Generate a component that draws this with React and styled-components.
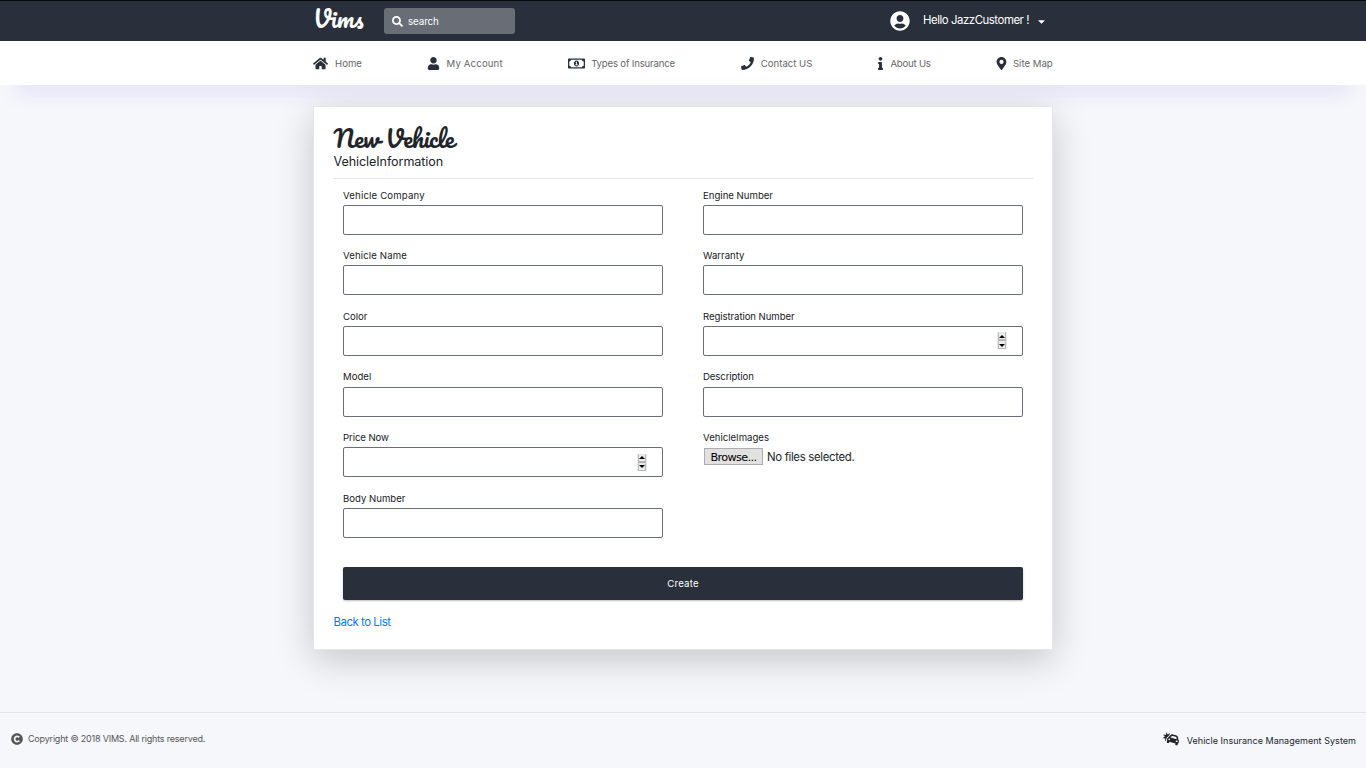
import React from "react";
import styled, { createGlobalStyle } from "styled-components";
import {
  FaHome, FaUser, FaRegMoneyBillAlt, FaPhone, FaInfo, FaMapMarkerAlt,
  FaUserCircle, FaSearch, FaCaretDown, FaCopyright, FaCarCrash,
} from "react-icons/fa";

const sans = `"Century Gothic", Inter, "Liberation Sans", sans-serif`;
const script = `Pacifico, cursive`;

const GlobalStyle = createGlobalStyle`
  * { box-sizing: border-box; }
  body { margin: 0; background: #f5f7fb; font-family: ${sans}; color: #212529; overflow: hidden; }
  svg { display: block; flex: none; }
`;

const Page = styled.div`
  height: 768px;
  display: flex;
  flex-direction: column;
`;

const TopBar = styled.header`
  height: 41px;
  flex: none;
  border-top: 1px solid #05070a;
  background: #292f3b;
  color: #fff;
  display: flex;
  justify-content: center;
`;

const TopInner = styled.div`
  width: 740px;
  display: flex;
  align-items: center;
`;

const Logo = styled.div`
  width: 71px;
  padding: 0 0 6px;
  font: 400 23.6px/30px ${script};
`;

const Search = styled.div`
  width: 131px;
  height: 26px;
  padding-left: 8px;
  display: flex;
  align-items: center;
  gap: 5px;
  border-radius: 3px;
  background: #696e76;
  font-size: 9.8px;
  letter-spacing: -0.1px;
`;

const UserMenu = styled.div`
  margin-left: auto;
  padding-right: 6px;
  display: flex;
  align-items: center;
  font-size: 11.4px;
  letter-spacing: -0.45px;
  white-space: nowrap;
`;

const UserName = styled.span`
  width: 106px;
  margin: -2px 7px 0 13px;
`;

const NavBar = styled.nav`
  height: 44px;
  flex: none;
  background: #fff;
  display: flex;
  justify-content: center;
  box-shadow: 0 22px 20px -16px rgba(90, 80, 200, 0.17);
`;

const NavInner = styled.div`
  width: 740px;
  display: flex;
  justify-content: space-between;
  align-items: center;
`;

const NavItem = styled.a`
  width: ${(p) => p.$width}px;
  display: flex;
  align-items: center;
  color: #292f3b;
  white-space: nowrap;

  svg { margin-left: ${(p) => -(p.$inset || 0)}px; }
`;

const NavText = styled.span`
  margin: 0 0 0 auto;
  width: ${(p) => p.$width}px;
  color: #666;
  font-size: 9.6px;
  letter-spacing: ${(p) => p.$track || 0}px;
`;

const Card = styled.main`
  width: 740px;
  height: 544px;
  flex: none;
  margin: 21px auto 0;
  padding: 14px 19px 0;
  background: #fff;
  border: 1px solid #e4e6ea;
  box-shadow: 0 10px 36px rgba(0, 0, 0, 0.2);
`;

const Title = styled.h1`
  margin: 0;
  height: 32px;
  padding-left: 0.5px;
  font: 400 23.8px/34px ${script};
  letter-spacing: -0.4px;
  white-space: nowrap;
`;

const Subtitle = styled.h2`
  margin: 0;
  height: 26px;
  padding-left: 0.5px;
  font-size: 12.6px;
  font-weight: 400;
  line-height: 17px;
  letter-spacing: -0.1px;
  border-bottom: 1px solid #e5e5e5;
`;

const Columns = styled.div`
  padding: 8.6px 10px 0;
  display: flex;
  gap: 40px;
`;

const Column = styled.div`
  width: 320px;
`;

const Field = styled.div`
  height: 60.6px;
`;

const Label = styled.label`
  display: block;
  height: 17.2px;
  font-size: 9.6px;
  line-height: 15px;
  color: #17191c;
  letter-spacing: ${(p) => p.$track || 0}px;
`;

const Box = styled.div`
  height: 30px;
  padding-right: 15px;
  border: 1px solid #6a6e76;
  border-radius: 2px;
  display: flex;
  align-items: center;
  justify-content: flex-end;
`;

const Spinner = styled.span`
  width: 10px;
  height: 17px;
  display: flex;
  flex-direction: column;
  gap: 1px;
  background: #b3b3b3;
  border: solid #e9e9e9;
  border-width: 0 1px;
`;

const SpinButton = styled.span`
  flex: 1;
  display: flex;
  align-items: center;
  justify-content: center;
  background: #ececec;
  border: 1px solid #b9b9b9;
  border-top-color: #e6e6e6;
`;

const Arrow = styled.i`
  border: solid transparent;
  border-width: ${(p) => (p.$up ? "0 3px 3px" : "3px 3px 0")};
  border-color: #000 transparent;
`;

const FilePicker = styled.div`
  display: flex;
  align-items: center;
  gap: 4px;
  padding: 0.7px 0 0 1px;
  font-size: 11.4px;
  letter-spacing: -0.33px;
`;

const FileStatus = styled.span`
  padding-top: 1.5px;
`;

const Browse = styled.span`
  width: 59px;
  height: 17px;
  border: 1px solid #adadad;
  background: #e1e1e1;
  color: #000;
  font: 11.2px/17px "DejaVu Sans", sans-serif;
  letter-spacing: -0.6px;
  text-align: center;
`;

const Create = styled.div`
  margin: 15.6px 10px 0;
  height: 33px;
  border-radius: 2px;
  background: #292f3b;
  box-shadow: 0 1px 2px rgba(0, 0, 0, 0.25);
  color: #fff;
  font-size: 9.6px;
  line-height: 34px;
  letter-spacing: 0.2px;
  text-align: center;
`;

const BackLink = styled.a`
  display: inline-block;
  margin-top: 13px;
  padding-left: 0.5px;
  color: #007bff;
  font-size: 11.4px;
  line-height: 18px;
  letter-spacing: -0.45px;
`;

const Footer = styled.footer`
  height: 56px;
  flex: none;
  margin-top: auto;
  padding: 0 10px 4px 11px;
  border-top: 1px solid #e2e4e8;
  display: flex;
  align-items: center;
  justify-content: space-between;
  font-size: 9px;
  white-space: nowrap;
`;

const FootGroup = styled.div`
  display: flex;
  align-items: center;
  gap: ${(p) => p.$gap}px;
  color: ${(p) => p.$color};
  letter-spacing: ${(p) => p.$track}px;
`;

const FootText = styled.span`
  padding-top: ${(p) => p.$drop || 0}px;
`;

const nav = [
  { text: "Home", Icon: FaHome, size: 15, width: 49, textWidth: 27 },
  { text: "My Account", Icon: FaUser, size: 13, width: 75, textWidth: 56, track: 0.15, inset: 1 },
  { text: "Types of Insurance", Icon: FaRegMoneyBillAlt, size: 17, width: 107, textWidth: 84, track: -0.18 },
  { text: "Contact US", Icon: FaPhone, size: 13, width: 71, textWidth: 51 },
  { text: "About Us", Icon: FaInfo, size: 13, width: 53, textWidth: 40, track: -0.2, inset: 3.5 },
  { text: "Site Map", Icon: FaMapMarkerAlt, size: 13, width: 57, textWidth: 40, inset: 1 },
];

const left = [
  { label: "Vehicle Company", track: 0.17 },
  { label: "Vehicle Name", track: 0.12 },
  { label: "Color" },
  { label: "Model" },
  { label: "Price Now", number: true, track: -0.1 },
  { label: "Body Number" },
];

const right = [
  { label: "Engine Number" },
  { label: "Warranty" },
  { label: "Registration Number", number: true, track: -0.08 },
  { label: "Description", track: -0.1 },
];

function FormField({ label, number, track }) {
  return (
    <Field>
      <Label $track={track}>{label}</Label>
      <Box>
        {number && (
          <Spinner>
            <SpinButton><Arrow $up /></SpinButton>
            <SpinButton><Arrow /></SpinButton>
          </Spinner>
        )}
      </Box>
    </Field>
  );
}

export default function App() {
  return (
    <Page>
      <GlobalStyle />
      <TopBar>
        <TopInner>
          <Logo>Vims</Logo>
          <Search><FaSearch size={11} />search</Search>
          <UserMenu>
            <FaUserCircle size={20} />
            <UserName>Hello JazzCustomer !</UserName>
            <FaCaretDown size={11} />
          </UserMenu>
        </TopInner>
      </TopBar>
      <NavBar>
        <NavInner>
          {nav.map(({ text, Icon, size, width, textWidth, track, inset }) => (
            <NavItem key={text} $width={width} $inset={inset}>
              <Icon size={size} />
              <NavText $width={textWidth} $track={track}>{text}</NavText>
            </NavItem>
          ))}
        </NavInner>
      </NavBar>
      <Card>
        <Title>New Vehicle</Title>
        <Subtitle>VehicleInformation</Subtitle>
        <Columns>
          <Column>{left.map((f) => <FormField key={f.label} {...f} />)}</Column>
          <Column>
            {right.map((f) => <FormField key={f.label} {...f} />)}
            <Label>VehicleImages</Label>
            <FilePicker>
              <Browse>Browse...</Browse>
              <FileStatus>No files selected.</FileStatus>
            </FilePicker>
          </Column>
        </Columns>
        <Create>Create</Create>
        <BackLink>Back to List</BackLink>
      </Card>
      <Footer>
        <FootGroup $gap={5} $color="#555" $track={-0.2}>
          <FaCopyright size={12} />
          <FootText>Copyright © 2018 VIMS. All rights reserved.</FootText>
        </FootGroup>
        <FootGroup $gap={8} $color="#212529" $track={0.04}>
          <FaCarCrash size={16} />
          <FootText $drop={4}>Vehicle Insurance Management System</FootText>
        </FootGroup>
      </Footer>
    </Page>
  );
}
